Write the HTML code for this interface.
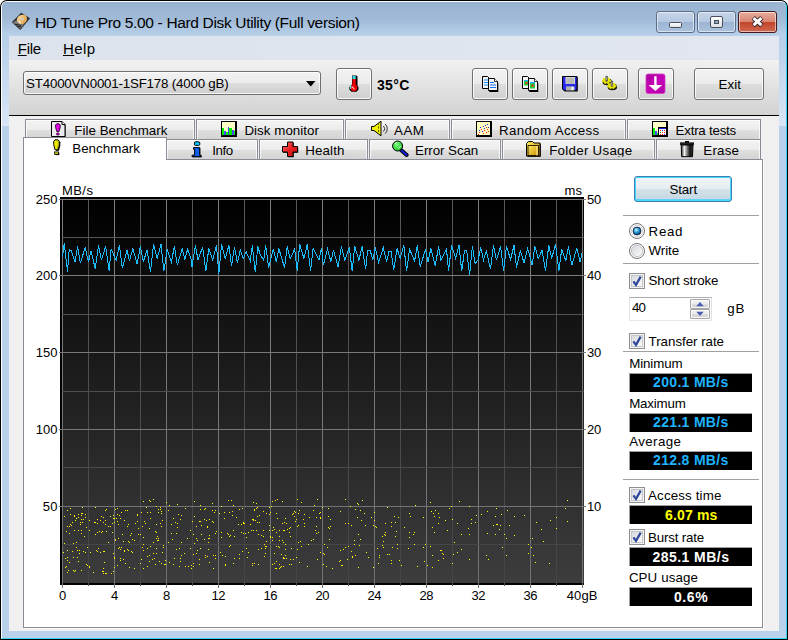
<!DOCTYPE html>
<html><head><meta charset="utf-8"><title>HD Tune Pro 5.00 - Hard Disk Utility (Full version)</title>
<style>
html,body{margin:0;padding:0;background:#fff;width:788px;height:640px;overflow:hidden}
body{font-family:"Liberation Sans",sans-serif;font-size:13.33px;color:#000;position:relative}
div,span,svg{position:absolute;box-sizing:border-box}
.t{white-space:nowrap;line-height:16px}
#win{left:0;top:0;width:788px;height:640px;background:#000;border-radius:7px 7px 0 0}
#frame{left:1px;top:1px;width:786px;height:638px;border-radius:6px 6px 0 0;background:#b9d1ea;border:1px solid;border-color:#fff #35d7ee #35d7ee #fff}
#title{left:2px;top:2px;width:784px;height:34px;border-radius:5px 5px 0 0;background:linear-gradient(#98b3d1 0%,#a0bad7 50%,#b9d1ea 100%)}
#client{left:9px;top:36px;width:770px;height:595px;background:#f0f0f0}
#menubar{left:9px;top:36px;width:770px;height:24px;background:linear-gradient(90deg,#dce3ed,#e2e7ef)}
#toolbar{left:9px;top:60px;width:770px;height:55px;background:linear-gradient(#f1f1f1 0%,#e3e3e3 45%,#d2d2d2 100%)}
#tbline{left:9px;top:115px;width:770px;height:1px;background:#000}
.fs{top:36px;width:7px;height:90px;background:linear-gradient(#b6cee9,#d8e6f6)}
.cb{border:1px solid #5b6d89;border-radius:3px;box-shadow:inset 0 0 0 1px rgba(255,255,255,.55);background:linear-gradient(#c5d5e8 0%,#b6c9e1 48%,#9db5d4 52%,#abc2de 100%)}
#close{background:linear-gradient(#e8ac9e 0%,#d98672 48%,#c3452b 52%,#d06a50 100%);border-color:#431a1c}
.btn{border:1px solid #707070;border-radius:3px;box-shadow:inset 0 0 0 1px rgba(255,255,255,.8);background:linear-gradient(#f2f2f2 0%,#ebebeb 48%,#dddddd 52%,#cfcfcf 100%)}
.tab{border:1px solid #898c95;border-bottom:none;box-shadow:inset 1px 1px 0 rgba(255,255,255,.75),inset -1px 0 0 rgba(255,255,255,.75);background:linear-gradient(#f3f3f3 0%,#ececec 48%,#dedede 52%,#d2d2d2 100%)}
.sep{height:1px;background:#a0a0a0;left:623px;width:136px}
.bb{background:#000;left:629px;width:123px;height:19px;border:solid #a0a0a0;border-width:1px 0 0 1px}
.chk{left:629px;width:16px;height:16px;border:1px solid #8e8f8f;background:#f4f4f4}
.chk i{position:absolute;left:1px;top:1px;width:12px;height:12px;border:1px solid #cfcfcf;background:linear-gradient(135deg,#d9dcdf,#fff)}
.rad{left:629px;width:16px;height:16px;border-radius:50%;border:1px solid #8e8f8f;background:radial-gradient(circle at 50% 50%,#f4f4f4 0,#d2d2d2 60%,#f4f4f4 100%)}
</style></head><body>
<div id="win"></div><div id="frame"></div><div id="title"></div>
<div class="fs" style="left:2px"></div><div class="fs" style="left:779px"></div>
<div id="client"></div><div id="menubar"></div><div id="toolbar"></div><div id="tbline"></div>
<!-- caption buttons -->
<div class="cb" style="left:656px;top:11px;width:39px;height:22px"></div>
<div class="cb" style="left:697px;top:11px;width:39px;height:22px"></div>
<div class="cb" id="close" style="left:738px;top:11px;width:39px;height:22px"></div>
<svg style="left:656px;top:11px" width="121" height="22" viewBox="0 0 121 22">
<defs><linearGradient id="gw" x1="0" y1="0" x2="0" y2="1"><stop offset="0" stop-color="#fff"/><stop offset="1" stop-color="#dcdfe4"/></linearGradient></defs><rect x="13.5" y="11.500" width="12" height="5" rx="1.200" fill="url(#gw)" stroke="#4a4f5c"/>
<rect x="54.5" y="5.500" width="12" height="11" rx="1.500" fill="url(#gw)" stroke="#4a4f5c"/><rect x="58.5" y="9.5" width="4" height="3" fill="#8ea3c2" stroke="#4a4f5c"/>
<path d="M97.200 6.800L105.800 14.600M105.800 6.800L97.200 14.600" stroke="#3d2a30" stroke-width="4.800" fill="none"/><path d="M97.600 7.200L105.400 14.200M105.400 7.200L97.600 14.200" stroke="#fff" stroke-width="2.900" fill="none"/>
</svg>
<!-- toolbar -->
<div class="btn" style="left:23px;top:71px;width:298px;height:24px;border-color:#707070"></div>
<svg style="left:306px;top:81px" width="10" height="6"><path d="M0 0h9.500l-4.750 5.500z" fill="#000"/></svg>
<div class="btn" style="left:336px;top:68px;width:36px;height:32px"></div>
<div class="btn" style="left:472px;top:68px;width:36px;height:32px"></div>
<div class="btn" style="left:512px;top:68px;width:36px;height:32px"></div>
<div class="btn" style="left:552px;top:68px;width:36px;height:32px"></div>
<div class="btn" style="left:592px;top:68px;width:36px;height:32px"></div>
<div class="btn" style="left:638px;top:68px;width:36px;height:32px"></div>
<div class="btn" style="left:694px;top:68px;width:70px;height:32px"></div>

<!-- tabs -->
<div class="tab" style="left:25px;top:119px;width:170px;height:21px"></div>
<div class="tab" style="left:196px;top:119px;width:148px;height:21px"></div>
<div class="tab" style="left:345px;top:119px;width:105px;height:21px"></div>
<div class="tab" style="left:451px;top:119px;width:175px;height:21px"></div>
<div class="tab" style="left:627px;top:119px;width:134px;height:21px"></div>
<div class="tab" style="left:166px;top:139px;width:92px;height:21px"></div>
<div class="tab" style="left:259px;top:139px;width:109px;height:21px"></div>
<div class="tab" style="left:369px;top:139px;width:132px;height:21px"></div>
<div class="tab" style="left:502px;top:139px;width:153px;height:21px"></div>
<div class="tab" style="left:656px;top:139px;width:105px;height:21px"></div>
<div id="panel" style="left:23px;top:159px;width:740px;height:469px;background:#fff;border:1px solid #898c95;box-shadow:1px 1px 0 #fbfbfb"></div>
<div id="seltab" style="left:23px;top:137px;width:144px;height:23px;background:#fff;border:1px solid #898c95;border-bottom:none"></div>

<svg id="chart" width="788" height="640" viewBox="0 0 788 640" style="position:absolute;left:0;top:0" shape-rendering="crispEdges">
<defs><linearGradient id="cg" x1="0" y1="0" x2="0" y2="1"><stop offset="0" stop-color="#000"/><stop offset="1" stop-color="#3d3d3d"/></linearGradient></defs>
<rect x="60" y="197" width="524" height="388" fill="#000"/>
<rect x="62" y="199" width="522" height="384" fill="url(#cg)"/>
<defs><linearGradient id="gMaj" x1="0" y1="0" x2="0" y2="1"><stop offset="0" stop-color="#7e7e7e"/><stop offset="1" stop-color="#727272"/></linearGradient><linearGradient id="gMin" x1="0" y1="0" x2="0" y2="1"><stop offset="0" stop-color="#585858"/><stop offset="1" stop-color="#454545"/></linearGradient></defs>
<rect x="62" y="199" width="1" height="384" fill="url(#gMaj)"/>
<rect x="62" y="583" width="1" height="5" fill="#727272"/>
<rect x="88" y="199" width="1" height="384" fill="url(#gMin)"/>
<rect x="88" y="583" width="1" height="3" fill="#505050"/>
<rect x="114" y="199" width="1" height="384" fill="url(#gMaj)"/>
<rect x="114" y="583" width="1" height="5" fill="#727272"/>
<rect x="140" y="199" width="1" height="384" fill="url(#gMin)"/>
<rect x="140" y="583" width="1" height="3" fill="#505050"/>
<rect x="166" y="199" width="1" height="384" fill="url(#gMaj)"/>
<rect x="166" y="583" width="1" height="5" fill="#727272"/>
<rect x="192" y="199" width="1" height="384" fill="url(#gMin)"/>
<rect x="192" y="583" width="1" height="3" fill="#505050"/>
<rect x="218" y="199" width="1" height="384" fill="url(#gMaj)"/>
<rect x="218" y="583" width="1" height="5" fill="#727272"/>
<rect x="244" y="199" width="1" height="384" fill="url(#gMin)"/>
<rect x="244" y="583" width="1" height="3" fill="#505050"/>
<rect x="270" y="199" width="1" height="384" fill="url(#gMaj)"/>
<rect x="270" y="583" width="1" height="5" fill="#727272"/>
<rect x="296" y="199" width="1" height="384" fill="url(#gMin)"/>
<rect x="296" y="583" width="1" height="3" fill="#505050"/>
<rect x="322" y="199" width="1" height="384" fill="url(#gMaj)"/>
<rect x="322" y="583" width="1" height="5" fill="#727272"/>
<rect x="348" y="199" width="1" height="384" fill="url(#gMin)"/>
<rect x="348" y="583" width="1" height="3" fill="#505050"/>
<rect x="374" y="199" width="1" height="384" fill="url(#gMaj)"/>
<rect x="374" y="583" width="1" height="5" fill="#727272"/>
<rect x="400" y="199" width="1" height="384" fill="url(#gMin)"/>
<rect x="400" y="583" width="1" height="3" fill="#505050"/>
<rect x="426" y="199" width="1" height="384" fill="url(#gMaj)"/>
<rect x="426" y="583" width="1" height="5" fill="#727272"/>
<rect x="452" y="199" width="1" height="384" fill="url(#gMin)"/>
<rect x="452" y="583" width="1" height="3" fill="#505050"/>
<rect x="478" y="199" width="1" height="384" fill="url(#gMaj)"/>
<rect x="478" y="583" width="1" height="5" fill="#727272"/>
<rect x="504" y="199" width="1" height="384" fill="url(#gMin)"/>
<rect x="504" y="583" width="1" height="3" fill="#505050"/>
<rect x="530" y="199" width="1" height="384" fill="url(#gMaj)"/>
<rect x="530" y="583" width="1" height="5" fill="#727272"/>
<rect x="556" y="199" width="1" height="384" fill="url(#gMin)"/>
<rect x="556" y="583" width="1" height="3" fill="#505050"/>
<rect x="582" y="199" width="1" height="384" fill="url(#gMaj)"/>
<rect x="582" y="583" width="1" height="5" fill="#727272"/>
<rect x="59" y="199" width="527" height="1" fill="#7e7e7e"/>
<rect x="62" y="237" width="522" height="1" fill="#565656"/>
<rect x="59" y="275" width="527" height="1" fill="#7c7c7c"/>
<rect x="62" y="314" width="522" height="1" fill="#525252"/>
<rect x="59" y="352" width="527" height="1" fill="#797979"/>
<rect x="62" y="391" width="522" height="1" fill="#4e4e4e"/>
<rect x="59" y="429" width="527" height="1" fill="#777777"/>
<rect x="62" y="467" width="522" height="1" fill="#4b4b4b"/>
<rect x="59" y="506" width="527" height="1" fill="#747474"/>
<rect x="62" y="544" width="522" height="1" fill="#474747"/>
<path d="M73 557h1v1h-1zM83 519h1v1h-1zM74 571h1v1h-1zM69 562h1v1h-1zM76 518h1v1h-1zM80 522h1v1h-1zM70 514h1v1h-1zM81 513h1v1h-1zM70 524h1v1h-1zM72 522h1v1h-1zM81 530h1v1h-1zM66 531h1v1h-1zM74 515h1v1h-1zM81 533h1v1h-1zM78 561h1v1h-1zM87 565h1v1h-1zM74 530h1v1h-1zM85 517h1v1h-1zM81 570h1v1h-1zM73 543h1v1h-1zM82 522h1v1h-1zM79 550h1v1h-1zM67 560h1v1h-1zM64 516h1v1h-1zM87 547h1v1h-1zM73 570h1v1h-1zM81 515h1v1h-1zM65 567h1v1h-1zM85 514h1v1h-1zM86 564h1v1h-1zM72 551h1v1h-1zM63 552h1v1h-1zM68 570h1v1h-1zM64 543h1v1h-1zM67 557h1v1h-1zM75 570h1v1h-1zM65 558h1v1h-1zM80 524h1v1h-1zM76 542h1v1h-1zM85 552h1v1h-1zM84 536h1v1h-1zM67 526h1v1h-1zM70 508h1v1h-1zM78 530h1v1h-1zM71 525h1v1h-1zM76 547h1v1h-1zM67 572h1v1h-1zM82 513h1v1h-1zM77 557h1v1h-1zM75 520h1v1h-1zM78 514h1v1h-1zM69 533h1v1h-1zM77 550h1v1h-1zM82 507h1v1h-1zM81 519h1v1h-1zM74 516h1v1h-1zM69 526h1v1h-1zM83 551h1v1h-1zM82 522h1v1h-1zM66 566h1v1h-1zM78 517h1v1h-1zM67 550h1v1h-1zM86 527h1v1h-1zM79 553h1v1h-1zM67 510h1v1h-1zM113 518h1v1h-1zM111 573h1v1h-1zM100 552h1v1h-1zM113 571h1v1h-1zM99 531h1v1h-1zM114 558h1v1h-1zM112 532h1v1h-1zM105 510h1v1h-1zM89 567h1v1h-1zM97 551h1v1h-1zM103 551h1v1h-1zM100 520h1v1h-1zM96 550h1v1h-1zM95 507h1v1h-1zM104 551h1v1h-1zM114 522h1v1h-1zM101 532h1v1h-1zM104 562h1v1h-1zM114 518h1v1h-1zM114 557h1v1h-1zM103 517h1v1h-1zM112 523h1v1h-1zM89 566h1v1h-1zM114 567h1v1h-1zM110 526h1v1h-1zM106 509h1v1h-1zM89 520h1v1h-1zM105 524h1v1h-1zM102 531h1v1h-1zM95 534h1v1h-1zM98 548h1v1h-1zM97 523h1v1h-1zM90 552h1v1h-1zM103 573h1v1h-1zM102 571h1v1h-1zM93 572h1v1h-1zM89 530h1v1h-1zM108 526h1v1h-1zM94 522h1v1h-1zM106 573h1v1h-1zM105 520h1v1h-1zM106 531h1v1h-1zM97 519h1v1h-1zM105 510h1v1h-1zM113 515h1v1h-1zM103 571h1v1h-1zM108 542h1v1h-1zM103 568h1v1h-1zM105 573h1v1h-1zM97 532h1v1h-1zM103 522h1v1h-1zM101 516h1v1h-1zM110 516h1v1h-1zM95 522h1v1h-1zM113 553h1v1h-1zM119 515h1v1h-1zM129 567h1v1h-1zM118 538h1v1h-1zM120 560h1v1h-1zM122 534h1v1h-1zM131 533h1v1h-1zM121 512h1v1h-1zM138 528h1v1h-1zM132 552h1v1h-1zM115 540h1v1h-1zM134 568h1v1h-1zM117 565h1v1h-1zM140 563h1v1h-1zM118 524h1v1h-1zM116 518h1v1h-1zM123 559h1v1h-1zM128 550h1v1h-1zM123 541h1v1h-1zM131 551h1v1h-1zM125 510h1v1h-1zM140 534h1v1h-1zM117 508h1v1h-1zM135 523h1v1h-1zM117 521h1v1h-1zM117 514h1v1h-1zM129 542h1v1h-1zM128 524h1v1h-1zM134 540h1v1h-1zM137 514h1v1h-1zM120 518h1v1h-1zM121 547h1v1h-1zM124 520h1v1h-1zM124 550h1v1h-1zM120 558h1v1h-1zM115 509h1v1h-1zM115 539h1v1h-1zM132 539h1v1h-1zM130 535h1v1h-1zM118 548h1v1h-1zM128 541h1v1h-1zM127 526h1v1h-1zM137 521h1v1h-1zM125 563h1v1h-1zM137 515h1v1h-1zM127 510h1v1h-1zM119 547h1v1h-1zM138 534h1v1h-1zM120 549h1v1h-1zM127 549h1v1h-1zM124 551h1v1h-1zM150 501h1v1h-1zM146 507h1v1h-1zM149 528h1v1h-1zM158 509h1v1h-1zM150 518h1v1h-1zM141 512h1v1h-1zM156 548h1v1h-1zM147 556h1v1h-1zM141 559h1v1h-1zM143 544h1v1h-1zM142 526h1v1h-1zM150 512h1v1h-1zM159 561h1v1h-1zM165 564h1v1h-1zM163 545h1v1h-1zM153 553h1v1h-1zM156 553h1v1h-1zM160 509h1v1h-1zM163 547h1v1h-1zM154 558h1v1h-1zM157 540h1v1h-1zM165 560h1v1h-1zM166 502h1v1h-1zM143 501h1v1h-1zM161 513h1v1h-1zM153 542h1v1h-1zM142 547h1v1h-1zM158 538h1v1h-1zM149 500h1v1h-1zM164 564h1v1h-1zM158 540h1v1h-1zM143 537h1v1h-1zM149 561h1v1h-1zM149 555h1v1h-1zM147 548h1v1h-1zM155 531h1v1h-1zM143 550h1v1h-1zM150 546h1v1h-1zM161 511h1v1h-1zM160 523h1v1h-1zM161 526h1v1h-1zM160 507h1v1h-1zM156 524h1v1h-1zM162 520h1v1h-1zM162 552h1v1h-1zM157 536h1v1h-1zM155 564h1v1h-1zM158 512h1v1h-1zM156 506h1v1h-1zM143 568h1v1h-1zM155 531h1v1h-1zM147 566h1v1h-1zM147 512h1v1h-1zM145 523h1v1h-1zM152 559h1v1h-1zM161 563h1v1h-1zM144 521h1v1h-1zM156 538h1v1h-1zM153 499h1v1h-1zM156 532h1v1h-1zM176 533h1v1h-1zM178 514h1v1h-1zM177 504h1v1h-1zM179 566h1v1h-1zM173 564h1v1h-1zM190 530h1v1h-1zM169 562h1v1h-1zM185 566h1v1h-1zM180 561h1v1h-1zM168 510h1v1h-1zM188 566h1v1h-1zM171 524h1v1h-1zM180 519h1v1h-1zM191 568h1v1h-1zM180 558h1v1h-1zM191 565h1v1h-1zM184 553h1v1h-1zM169 505h1v1h-1zM181 515h1v1h-1zM187 538h1v1h-1zM168 542h1v1h-1zM171 533h1v1h-1zM177 523h1v1h-1zM190 548h1v1h-1zM175 522h1v1h-1zM176 549h1v1h-1zM179 548h1v1h-1zM172 539h1v1h-1zM192 521h1v1h-1zM181 555h1v1h-1zM181 542h1v1h-1zM173 518h1v1h-1zM177 527h1v1h-1zM174 558h1v1h-1zM185 508h1v1h-1zM216 531h1v1h-1zM206 520h1v1h-1zM205 555h1v1h-1zM194 543h1v1h-1zM204 539h1v1h-1zM209 562h1v1h-1zM199 564h1v1h-1zM200 548h1v1h-1zM207 526h1v1h-1zM193 534h1v1h-1zM215 558h1v1h-1zM208 538h1v1h-1zM193 566h1v1h-1zM209 535h1v1h-1zM200 521h1v1h-1zM197 550h1v1h-1zM196 553h1v1h-1zM215 555h1v1h-1zM207 556h1v1h-1zM194 501h1v1h-1zM200 509h1v1h-1zM213 568h1v1h-1zM197 540h1v1h-1zM213 555h1v1h-1zM196 526h1v1h-1zM209 519h1v1h-1zM205 557h1v1h-1zM212 503h1v1h-1zM207 527h1v1h-1zM213 522h1v1h-1zM208 542h1v1h-1zM200 505h1v1h-1zM215 510h1v1h-1zM193 563h1v1h-1zM214 512h1v1h-1zM201 534h1v1h-1zM204 509h1v1h-1zM215 533h1v1h-1zM204 519h1v1h-1zM193 554h1v1h-1zM209 538h1v1h-1zM199 559h1v1h-1zM199 521h1v1h-1zM201 525h1v1h-1zM196 538h1v1h-1zM212 521h1v1h-1zM208 549h1v1h-1zM194 516h1v1h-1zM205 508h1v1h-1zM212 510h1v1h-1zM241 532h1v1h-1zM233 563h1v1h-1zM229 512h1v1h-1zM224 518h1v1h-1zM239 554h1v1h-1zM233 505h1v1h-1zM230 535h1v1h-1zM224 512h1v1h-1zM227 533h1v1h-1zM222 555h1v1h-1zM225 556h1v1h-1zM228 534h1v1h-1zM221 506h1v1h-1zM225 565h1v1h-1zM233 530h1v1h-1zM242 508h1v1h-1zM239 558h1v1h-1zM239 509h1v1h-1zM231 500h1v1h-1zM244 523h1v1h-1zM225 564h1v1h-1zM238 524h1v1h-1zM229 546h1v1h-1zM220 552h1v1h-1zM241 524h1v1h-1zM228 500h1v1h-1zM219 513h1v1h-1zM234 536h1v1h-1zM243 523h1v1h-1zM232 515h1v1h-1zM234 558h1v1h-1zM242 551h1v1h-1zM243 522h1v1h-1zM229 536h1v1h-1zM230 545h1v1h-1zM221 532h1v1h-1zM243 533h1v1h-1zM221 537h1v1h-1zM236 517h1v1h-1zM232 511h1v1h-1zM253 520h1v1h-1zM248 552h1v1h-1zM259 515h1v1h-1zM258 564h1v1h-1zM266 541h1v1h-1zM269 514h1v1h-1zM269 525h1v1h-1zM253 530h1v1h-1zM253 519h1v1h-1zM259 522h1v1h-1zM252 563h1v1h-1zM263 511h1v1h-1zM257 522h1v1h-1zM261 548h1v1h-1zM270 536h1v1h-1zM246 537h1v1h-1zM252 565h1v1h-1zM256 503h1v1h-1zM252 519h1v1h-1zM264 544h1v1h-1zM251 530h1v1h-1zM261 535h1v1h-1zM264 556h1v1h-1zM266 513h1v1h-1zM265 546h1v1h-1zM256 530h1v1h-1zM255 520h1v1h-1zM253 502h1v1h-1zM245 533h1v1h-1zM266 546h1v1h-1zM254 509h1v1h-1zM270 537h1v1h-1zM247 557h1v1h-1zM257 516h1v1h-1zM265 548h1v1h-1zM250 524h1v1h-1zM258 549h1v1h-1zM254 510h1v1h-1zM254 563h1v1h-1zM256 508h1v1h-1zM269 530h1v1h-1zM265 553h1v1h-1zM257 507h1v1h-1zM258 534h1v1h-1zM248 532h1v1h-1zM263 536h1v1h-1zM269 507h1v1h-1zM246 548h1v1h-1zM270 512h1v1h-1zM263 530h1v1h-1zM294 516h1v1h-1zM282 540h1v1h-1zM276 513h1v1h-1zM283 558h1v1h-1zM296 519h1v1h-1zM280 567h1v1h-1zM272 537h1v1h-1zM281 566h1v1h-1zM291 564h1v1h-1zM293 559h1v1h-1zM276 561h1v1h-1zM278 546h1v1h-1zM277 518h1v1h-1zM289 532h1v1h-1zM287 529h1v1h-1zM274 553h1v1h-1zM277 499h1v1h-1zM292 514h1v1h-1zM283 542h1v1h-1zM291 548h1v1h-1zM284 522h1v1h-1zM284 530h1v1h-1zM285 518h1v1h-1zM271 506h1v1h-1zM285 555h1v1h-1zM290 536h1v1h-1zM276 532h1v1h-1zM274 529h1v1h-1zM284 558h1v1h-1zM285 549h1v1h-1zM272 501h1v1h-1zM273 527h1v1h-1zM295 512h1v1h-1zM272 564h1v1h-1zM283 557h1v1h-1zM275 500h1v1h-1zM290 559h1v1h-1zM274 563h1v1h-1zM286 558h1v1h-1zM296 557h1v1h-1zM294 511h1v1h-1zM282 523h1v1h-1zM276 546h1v1h-1zM279 536h1v1h-1zM275 568h1v1h-1zM286 523h1v1h-1zM290 527h1v1h-1zM282 501h1v1h-1zM283 566h1v1h-1zM279 564h1v1h-1zM283 557h1v1h-1zM279 540h1v1h-1zM272 530h1v1h-1zM285 544h1v1h-1zM293 513h1v1h-1zM279 547h1v1h-1zM283 530h1v1h-1zM279 530h1v1h-1zM289 528h1v1h-1zM295 521h1v1h-1zM276 568h1v1h-1zM272 540h1v1h-1zM279 568h1v1h-1zM289 564h1v1h-1zM281 554h1v1h-1zM298 525h1v1h-1zM316 533h1v1h-1zM313 510h1v1h-1zM301 546h1v1h-1zM317 499h1v1h-1zM297 526h1v1h-1zM300 541h1v1h-1zM304 526h1v1h-1zM315 530h1v1h-1zM316 517h1v1h-1zM301 502h1v1h-1zM319 513h1v1h-1zM299 562h1v1h-1zM318 532h1v1h-1zM322 507h1v1h-1zM298 542h1v1h-1zM308 544h1v1h-1zM311 540h1v1h-1zM320 517h1v1h-1zM297 499h1v1h-1zM309 517h1v1h-1zM298 513h1v1h-1zM297 549h1v1h-1zM303 519h1v1h-1zM313 539h1v1h-1zM317 559h1v1h-1zM316 526h1v1h-1zM299 510h1v1h-1zM320 552h1v1h-1zM314 505h1v1h-1zM320 512h1v1h-1zM320 518h1v1h-1zM304 523h1v1h-1zM304 514h1v1h-1zM307 566h1v1h-1zM345 523h1v1h-1zM345 547h1v1h-1zM340 550h1v1h-1zM348 523h1v1h-1zM332 568h1v1h-1zM329 539h1v1h-1zM323 564h1v1h-1zM330 519h1v1h-1zM328 527h1v1h-1zM329 528h1v1h-1zM342 565h1v1h-1zM343 549h1v1h-1zM340 560h1v1h-1zM339 561h1v1h-1zM323 553h1v1h-1zM330 526h1v1h-1zM348 546h1v1h-1zM341 565h1v1h-1zM328 508h1v1h-1zM326 566h1v1h-1zM328 516h1v1h-1zM345 499h1v1h-1zM327 547h1v1h-1zM324 554h1v1h-1zM324 544h1v1h-1zM347 559h1v1h-1zM340 511h1v1h-1zM373 567h1v1h-1zM361 520h1v1h-1zM355 509h1v1h-1zM374 512h1v1h-1zM373 525h1v1h-1zM364 513h1v1h-1zM374 520h1v1h-1zM358 534h1v1h-1zM357 503h1v1h-1zM358 504h1v1h-1zM359 545h1v1h-1zM365 525h1v1h-1zM368 557h1v1h-1zM362 500h1v1h-1zM360 510h1v1h-1zM366 552h1v1h-1zM351 525h1v1h-1zM354 540h1v1h-1zM355 555h1v1h-1zM350 506h1v1h-1zM352 557h1v1h-1zM354 544h1v1h-1zM360 539h1v1h-1zM357 517h1v1h-1zM358 567h1v1h-1zM371 517h1v1h-1zM352 556h1v1h-1zM351 551h1v1h-1zM392 547h1v1h-1zM385 532h1v1h-1zM387 554h1v1h-1zM377 548h1v1h-1zM375 526h1v1h-1zM383 541h1v1h-1zM391 563h1v1h-1zM395 536h1v1h-1zM379 555h1v1h-1zM397 548h1v1h-1zM376 527h1v1h-1zM391 560h1v1h-1zM389 554h1v1h-1zM385 535h1v1h-1zM397 544h1v1h-1zM382 536h1v1h-1zM395 522h1v1h-1zM391 526h1v1h-1zM399 560h1v1h-1zM394 516h1v1h-1zM382 545h1v1h-1zM391 522h1v1h-1zM385 523h1v1h-1zM398 517h1v1h-1zM396 531h1v1h-1zM379 557h1v1h-1zM384 534h1v1h-1zM383 547h1v1h-1zM378 563h1v1h-1zM387 507h1v1h-1zM413 534h1v1h-1zM423 547h1v1h-1zM410 516h1v1h-1zM409 532h1v1h-1zM401 565h1v1h-1zM414 544h1v1h-1zM424 561h1v1h-1zM408 548h1v1h-1zM425 544h1v1h-1zM408 548h1v1h-1zM404 527h1v1h-1zM409 513h1v1h-1zM414 532h1v1h-1zM423 517h1v1h-1zM409 537h1v1h-1zM415 505h1v1h-1zM417 566h1v1h-1zM432 527h1v1h-1zM451 506h1v1h-1zM430 502h1v1h-1zM432 567h1v1h-1zM433 513h1v1h-1zM445 520h1v1h-1zM449 508h1v1h-1zM447 530h1v1h-1zM443 554h1v1h-1zM441 550h1v1h-1zM432 555h1v1h-1zM430 546h1v1h-1zM438 523h1v1h-1zM435 510h1v1h-1zM427 565h1v1h-1zM440 550h1v1h-1zM438 513h1v1h-1zM434 532h1v1h-1zM443 558h1v1h-1zM439 517h1v1h-1zM431 511h1v1h-1zM452 519h1v1h-1zM442 553h1v1h-1zM434 516h1v1h-1zM438 560h1v1h-1zM459 501h1v1h-1zM469 506h1v1h-1zM567 500h1v1h-1zM565 508h1v1h-1zM496 508h1v1h-1zM487 511h1v1h-1zM507 510h1v1h-1zM476 515h1v1h-1zM481 514h1v1h-1zM501 514h1v1h-1zM495 516h1v1h-1zM514 516h1v1h-1zM524 515h1v1h-1zM471 519h1v1h-1zM475 522h1v1h-1zM457 523h1v1h-1zM471 523h1v1h-1zM493 525h1v1h-1zM496 524h1v1h-1zM497 524h1v1h-1zM500 525h1v1h-1zM509 525h1v1h-1zM468 528h1v1h-1zM499 529h1v1h-1zM461 534h1v1h-1zM469 534h1v1h-1zM487 533h1v1h-1zM495 534h1v1h-1zM504 534h1v1h-1zM514 535h1v1h-1zM506 538h1v1h-1zM454 542h1v1h-1zM461 549h1v1h-1zM457 552h1v1h-1zM453 554h1v1h-1zM502 547h1v1h-1zM486 555h1v1h-1zM488 559h1v1h-1zM506 555h1v1h-1zM469 559h1v1h-1zM452 563h1v1h-1zM536 522h1v1h-1zM550 520h1v1h-1zM556 517h1v1h-1zM567 521h1v1h-1zM541 529h1v1h-1zM556 528h1v1h-1zM532 538h1v1h-1zM543 541h1v1h-1zM528 544h1v1h-1zM531 547h1v1h-1zM528 553h1v1h-1zM533 555h1v1h-1zM535 562h1v1h-1zM549 563h1v1h-1z" fill="#ffff00"/>
<path d="M62.5 256.8 L64.2 243.0 L67.5 271.5 L69.2 249.2 L71.4 250.9 L75.1 261.8 L77.6 246.4 L80.4 263.1 L85.1 247.6 L88.5 261.8 L91.0 250.9 L95.2 268.5 L98.5 245.4 L101.5 260.1 L105.6 246.4 L109.1 271.0 L111.1 249.2 L116.1 260.1 L119.5 245.4 L122.3 268.2 L127.0 250.1 L129.5 261.0 L132.9 248.4 L137.1 264.3 L140.4 246.4 L143.3 261.8 L147.1 250.1 L150.5 272.2 L153.5 244.2 L157.2 258.5 L161.0 244.2 L163.9 271.0 L167.2 249.2 L171.4 261.8 L174.4 246.4 L177.3 265.2 L182.3 248.4 L184.8 260.1 L187.6 249.2 L191.5 260.1 L192.0 266.8 L195.4 245.4 L198.0 260.1 L202.6 247.1 L205.9 271.0 L208.8 248.4 L212.6 260.1 L216.5 245.1 L218.8 274.4 L221.5 244.2 L225.2 258.5 L228.9 245.4 L231.5 266.0 L234.4 247.1 L237.4 262.6 L240.3 250.1 L243.3 258.5 L246.1 251.8 L250.3 261.0 L252.3 245.4 L255.3 272.2 L257.8 246.4 L260.4 255.1 L263.7 260.1 L265.7 245.4 L268.7 267.7 L273.3 249.2 L276.3 261.8 L278.8 248.4 L284.6 267.7 L287.2 246.4 L290.2 258.5 L294.7 249.2 L297.2 271.0 L299.7 244.2 L303.9 258.5 L307.3 244.2 L310.6 271.0 L313.1 248.4 L319.0 260.1 L321.5 247.6 L323.4 265.2 L327.5 249.2 L330.9 261.8 L333.4 250.1 L338.1 266.8 L341.4 246.4 L344.8 260.1 L349.3 247.6 L352.2 271.0 L354.7 246.4 L358.9 260.1 L362.2 246.4 L365.6 269.3 L367.7 250.1 L370.3 250.9 L372.8 260.1 L375.3 247.6 L378.6 262.6 L383.3 247.6 L386.7 261.8 L389.0 250.9 L391.2 251.8 L393.7 270.2 L397.1 248.4 L400.1 258.5 L403.8 245.4 L406.6 271.0 L409.6 249.2 L414.6 261.0 L417.2 245.4 L420.2 266.8 L425.5 249.2 L428.0 261.8 L430.9 248.4 L435.2 266.0 L438.6 246.4 L440.9 260.1 L446.5 249.2 L448.6 271.0 L451.5 245.4 L455.7 258.5 L459.0 245.4 L461.7 271.0 L464.6 250.1 L466.7 250.9 L469.6 274.9 L472.4 246.4 L475.1 263.5 L478.0 260.1 L480.8 247.6 L483.5 260.1 L486.3 250.9 L490.5 269.3 L493.5 245.4 L496.4 260.1 L500.6 246.4 L503.6 271.0 L506.4 246.4 L510.6 259.3 L514.0 245.4 L516.5 267.7 L520.3 250.9 L524.0 262.6 L527.7 248.4 L532.1 265.2 L534.9 246.4 L538.3 258.5 L542.1 250.1 L545.5 271.0 L548.8 245.4 L551.7 258.5 L555.5 244.2 L558.9 271.0 L561.7 249.2 L565.9 261.0 L568.4 246.4 L571.8 265.2 L576.8 248.4 L580.1 261.8 L582.0 253.4" fill="none" stroke="#1cbcff" stroke-width="1" shape-rendering="crispEdges" stroke-linejoin="miter"/>
</svg>
<!-- right panel -->
<div id="start" style="left:634px;top:176px;width:98px;height:26px;border:1px solid #3c7fb1;border-radius:3px;box-shadow:inset 0 0 0 1px #48d8fb,inset 0 -2px 0 0 #5fd4f5;background:linear-gradient(#f1f5f8 0%,#e6edf1 48%,#d4e1e9 52%,#c4d7e4 100%)"></div>
<div class="sep" style="top:215px"></div>
<div class="sep" style="top:263px"></div>
<div style="left:629px;top:297px;width:83px;height:24px;background:#fff;border:1px solid;border-color:#abadb3 #dbdfe6 #e3e9ef #e2e3ea"></div>
<div class="btn" style="left:690px;top:299px;width:20px;height:10px;border-radius:1px;border-color:#a5a5a5"></div>
<div class="btn" style="left:690px;top:309px;width:20px;height:10px;border-radius:1px;border-color:#a5a5a5"></div>
<svg style="left:690px;top:299px" width="20" height="20"><path d="M6.300 7.200l3.700-4.200l3.700 4.200z M6.300 12.800l3.700 4.200l3.700-4.200z" fill="#4a5cb0"/></svg>
<div class="sep" style="top:351px"></div>
<div class="bb" style="top:373px"></div>
<div class="bb" style="top:413px"></div>
<div class="bb" style="top:451px"></div>
<div class="sep" style="top:479px"></div>
<div class="bb" style="top:505px"></div>
<div class="bb" style="top:547px"></div>
<div class="bb" style="top:587px"></div>
<svg id="icons" width="788" height="640" viewBox="0 0 788 640" style="left:0;top:0">
<defs>
<linearGradient id="gOr" x1="0" y1="0" x2="1" y2="1"><stop offset="0" stop-color="#ffe2a8"/><stop offset="1" stop-color="#dc9838"/></linearGradient>
<linearGradient id="gRed" x1="0" y1="0" x2="1" y2="1"><stop offset="0" stop-color="#ff7070"/><stop offset=".5" stop-color="#e82020"/><stop offset="1" stop-color="#c01010"/></linearGradient>
<linearGradient id="gFold" x1="0" y1="0" x2="1" y2="1"><stop offset="0" stop-color="#ffe860"/><stop offset="1" stop-color="#c89000"/></linearGradient>
<linearGradient id="gTrash" x1="0" y1="0" x2="1" y2="0"><stop offset="0" stop-color="#303030"/><stop offset=".28" stop-color="#f0f0f0"/><stop offset=".5" stop-color="#808080"/><stop offset=".75" stop-color="#101010"/><stop offset="1" stop-color="#404040"/></linearGradient>
<linearGradient id="gPur" x1="0" y1="0" x2="1" y2="1"><stop offset="0" stop-color="#a8009c"/><stop offset=".5" stop-color="#c800b8"/><stop offset="1" stop-color="#b000a4"/></linearGradient>
<radialGradient id="gGreen" cx=".4" cy=".35" r=".7"><stop offset="0" stop-color="#80ff80"/><stop offset="1" stop-color="#10c020"/></radialGradient>
<radialGradient id="gDot" cx=".4" cy=".35" r=".7"><stop offset="0" stop-color="#c8f6ff"/><stop offset=".5" stop-color="#2498d8"/><stop offset="1" stop-color="#0a3a68"/></radialGradient>
<linearGradient id="gChk" x1="0" y1="0" x2="1" y2="1"><stop offset="0" stop-color="#d4d8dc"/><stop offset="1" stop-color="#fdfdfd"/></linearGradient>
<radialGradient id="gRad" cx=".5" cy=".5" r=".5"><stop offset="0" stop-color="#f4f4f4"/><stop offset=".6" stop-color="#e0e0e0"/><stop offset="1" stop-color="#c4c4c4"/></radialGradient>
<g id="ck"><rect x="629.500" y=".5" width="15" height="15" fill="#f4f4f4" stroke="#8e8f8f"/><rect x="631.500" y="2.500" width="11" height="11" fill="url(#gChk)" stroke="#c2c6ca"/>
<path d="M633.400 8.300L636 11.900L640.700 3.600" fill="none" stroke="#31489a" stroke-width="2.200"/></g>
</defs>
<!-- title icon: hard disk -->
<g id="i-hdd">
<path d="M21.2 12.800L30 18.200L20.300 30L11.800 22.300z" fill="#2c2c2c"/>
<path d="M12.500 22.400L20.200 28.800L24.500 23.500L17 20z" fill="#7a7a7a"/>
<path d="M15 24.200l6 1.200M16.500 26l4.500 1" stroke="#222" stroke-width="1"/>
<ellipse cx="22" cy="19.300" rx="5.200" ry="4.500" transform="rotate(-25 22 19.300)" fill="url(#gOr)"/>
<rect x="20.500" y="18.200" width="3.400" height="1.800" fill="#c8ccd8"/>
<path d="M19.500 21l.8 2.500" stroke="#fff" stroke-width="1"/>
</g>
<!-- File Benchmark: page with magenta ! -->
<g id="i-fb">
<path d="M52 122h10.500l3 3v12h-13.500z" fill="#000"/>
<path d="M51.500 121.500h10.500l3 3v12h-13.500z" fill="#ececec" stroke="#000"/>
<path d="M62 121.500v3h3" fill="#fff" stroke="#000"/>
<path d="M56.700 123.800h2.400l1.100 1.300v2.400l-1.200 4h-2.200l-1.200-4v-2.400z" fill="#e400e4" stroke="#280028" stroke-width=".9"/>
<rect x="56.500" y="133" width="2.700" height="2" rx=".8" fill="#e400e4" stroke="#280028" stroke-width=".8"/>
</g>
<!-- Benchmark: yellow ! -->
<g id="i-bm">
<path d="M55 139.800h3l1.300 1.500v3.200l-1.300 5.300h-3l-1.300-5.300v-3.200z" fill="#000" transform="translate(1 1)"/>
<path d="M55 139.800h3l1.300 1.500v3.200l-1.300 5.300h-3l-1.300-5.300v-3.200z" fill="#e8e800" stroke="#000" stroke-width="1"/>
<path d="M57.900 141.200l.6 1v2.200l-1 4" fill="none" stroke="#a4a400" stroke-width="1.100"/>
<rect x="55.400" y="152.600" width="3.900" height="2.500" fill="#000"/>
<rect x="54.600" y="151.900" width="3.800" height="2.400" fill="#d8d800" stroke="#000" stroke-width=".8"/>
</g>
<!-- Disk monitor -->
<g id="i-dm" shape-rendering="crispEdges">
<rect x="221" y="121" width="16" height="16" fill="#000"/>
<rect x="222" y="122" width="13" height="13" fill="#ffffc8"/>
<rect x="222" y="128" width="2" height="7" fill="#00f000"/><rect x="224" y="131" width="2" height="4" fill="#4848ff"/>
<rect x="226" y="132" width="2" height="3" fill="#00f000"/><rect x="228" y="127" width="1" height="8" fill="#4848ff"/>
<rect x="229" y="128" width="3" height="7" fill="#00f000"/><rect x="232" y="130" width="2" height="5" fill="#4848ff"/>
<rect x="234" y="131" width="1" height="4" fill="#00f000"/>
</g>
<!-- Info -->
<g id="i-info">
<rect x="194.400" y="141.800" width="5.400" height="3.600" rx="1.200" fill="#08c8ff" stroke="#000"/>
<path d="M193.500 147.600h6.200v7.600h1.400v1.500h-9v-1.500h2.500v-6h-1.100z" fill="#000" transform="translate(.6 .5)"/>
<path d="M193.500 147.600h6.200v7.600h1.400v1.500h-9v-1.500h2.500v-6h-1.100z" fill="#1060f0" stroke="#000" stroke-width="1"/>
</g>
<!-- Health: red cross -->
<g id="i-health">
<path d="M287.500 142h5.500v4.500h4.500v5.500h-4.500v4.500h-5.500v-4.500h-5v-5.500h5z" fill="#000" transform="translate(.7 .7)"/>
<path d="M287.500 142h5.500v4.500h4.500v5.500h-4.500v4.500h-5.500v-4.500h-5v-5.500h5z" fill="url(#gRed)" stroke="#000" stroke-width="1"/>
</g>
<!-- AAM: speaker -->
<g id="i-aam">
<path d="M371.500 126.500h2.500l7-5.300v14.600l-7-5.300h-2.500z" fill="#f0f000" stroke="#000" stroke-width="1"/>
<path d="M378.500 123v11" stroke="#606000" stroke-width="1" stroke-dasharray="2 1.500"/>
<path d="M383.500 126a4 4 0 0 1 0 5.500M385.200 124a6.500 6.500 0 0 1 0 9.500" fill="none" stroke="#303030" stroke-width="1"/>
</g>
<!-- Error scan: magnifier -->
<g id="i-es">
<path d="M401 150l5.700 5" stroke="#000" stroke-width="4" stroke-linecap="round"/>
<path d="M401.500 150.500l5 4.300" stroke="#1020d0" stroke-width="2.200" stroke-linecap="round"/>
<circle cx="397.600" cy="146" r="5" fill="url(#gGreen)" stroke="#000" stroke-width="1"/>
<path d="M395 144l2-2M398.500 148.500l2.500-2.500" stroke="#d8ffd8" stroke-width="1"/>
</g>
<!-- Random access -->
<g id="i-ra" shape-rendering="crispEdges">
<rect x="476" y="121" width="16" height="16" fill="#000"/>
<rect x="477" y="122" width="13" height="13" fill="#ffffc0"/>
<path d="M479 130h1v1h-1zM480 127h1v1h-1zM482 131h1v1h-1zM484 128h1v1h-1zM485 125h1v1h-1zM487 124h1v1h-1zM488 127h1v1h-1zM483 126h1v1h-1z" fill="#2020ff"/>
<path d="M478 134h1v1h-1zM479 132h1v1h-1zM481 129h1v1h-1zM483 133h1v1h-1zM484 130h1v1h-1zM486 132h1v1h-1zM487 129h1v1h-1zM488 131h1v1h-1zM486 127h1v1h-1z" fill="#ff2020"/>
</g>
<!-- Folder -->
<g id="i-fold">
<path d="M526.500 143.500l2-2h4l1.500 1.500h6v13h-13.500z" fill="#000" transform="translate(.8 .8)"/>
<path d="M526.500 143.500l2-2h4l1.500 1.500h6v13h-13.500z" fill="url(#gFold)" stroke="#000" stroke-width="1"/>
<path d="M528 145.500h10.500v10h-10.500z" fill="url(#gFold)" stroke="#000" stroke-width=".8"/>
<path d="M537 146v9.500" stroke="#fff0a0" stroke-width="1"/>
</g>
<!-- Extra tests -->
<g id="i-et" shape-rendering="crispEdges">
<rect x="652" y="121" width="16" height="16" fill="#000"/>
<rect x="653" y="122" width="13" height="13" fill="#ffffc8"/>
<rect x="653" y="128" width="2" height="7" fill="#00f000"/><rect x="655" y="131" width="2" height="4" fill="#4848ff"/><rect x="657" y="133" width="1" height="2" fill="#00f000"/>
<rect x="658" y="127" width="9" height="9" fill="#000"/>
<rect x="659" y="128" width="7" height="1" fill="#2020e0"/>
<rect x="659" y="129" width="7" height="6" fill="#fff"/>
<path d="M660 130h1v1h-1zM664 130h1v1h-1zM662 132h1v1h-1zM664 132h1v1h-1zM660 134h1v1h-1zM662 134h1v1h-1z" fill="#ff2020"/>
<path d="M662 130h1v1h-1zM664 134h1v1h-1z" fill="#2020ff"/><path d="M660 132h1v1h-1z" fill="#00c000"/>
</g>
<!-- Erase: trash -->
<g id="i-tr">
<rect x="685" y="141" width="4" height="2" fill="#000"/>
<rect x="680" y="142.300" width="14" height="2.700" fill="#202020"/>
<path d="M681.200 145h11.800l-.5 11.700h-10.800z" fill="url(#gTrash)" stroke="#000" stroke-width="1"/>
</g>
<!-- thermometer -->
<g id="i-th">
<path d="M352 75.500h4.500l1 1v9l1 2v2l-2 2.200h-5l-2.200-2.200v-2.500l2.700-2.500z" fill="#000"/>
<rect x="352.500" y="76" width="3.200" height="3" fill="#30e0e8"/>
<rect x="352.500" y="79" width="3.200" height="8" fill="#f00000"/>
<circle cx="353.800" cy="87.800" r="3.400" fill="#f00000"/>
<rect x="349.800" y="85.300" width="1.500" height="3.500" fill="#50e0e8"/>
<path d="M352.200 86.500l.8 1.500l1.500.8" stroke="#fff" stroke-width="1" fill="none"/>
</g>
<!-- copy text -->
<g id="i-c1">
<path d="M482.500 76.500h5l1.500 1.500v10.500h-6.500z" fill="#f4f4f4" stroke="#000"/>
<path d="M484 80h4M484 82.500h4M484 85h4" stroke="#1090ff" stroke-width="1"/>
<path d="M488.500 79.300h6l3 3v9h-9z" fill="#000" transform="translate(.8 .6)"/>
<path d="M488.500 78.500h6l3 3v9h-9z" fill="#f4f4f4" stroke="#000"/>
<path d="M494.500 78.500v3h3" fill="#fff" stroke="#000" stroke-width=".8"/>
<path d="M490 82.500h4M490 85h6M490 87.500h6" stroke="#1070ff" stroke-width="1.200"/>
</g>
<!-- copy image -->
<g id="i-c2">
<path d="M522.500 76.500h5l1.500 1.500v10.500h-6.500z" fill="#f4f4f4" stroke="#000"/>
<rect x="524" y="80" width="4.500" height="5.500" fill="#20d040"/><rect x="524" y="80" width="4.500" height="1.200" fill="#20b0ff"/><rect x="525.500" y="82" width="2" height="2" fill="#e03010"/>
<path d="M528.500 79.300h6l3 3v9h-9z" fill="#000" transform="translate(.8 .6)"/>
<path d="M528.500 78.500h6l3 3v9h-9z" fill="#f4f4f4" stroke="#000"/>
<path d="M534.500 78.500v3h3" fill="#fff" stroke="#000" stroke-width=".8"/>
<rect x="530" y="82" width="5" height="6.500" fill="#20d040"/><rect x="530" y="82" width="5" height="1.300" fill="#20b0ff"/><rect x="531.500" y="84.500" width="2.200" height="2.200" fill="#e03010"/>
</g>
<!-- floppy -->
<g id="i-fl">
<path d="M562.500 76.500h14.500v14.500h-13l-1.500-1.500z" fill="#000" transform="translate(.7 .5)"/>
<path d="M562.500 76.500h14.500v14h-13l-1.500-1.500z" fill="#2828e8" stroke="#000" stroke-width="1"/>
<rect x="565.500" y="77" width="9.500" height="7" fill="#d4d4d4"/>
<path d="M566.500 79h7.500M566.500 81h7.500M566.500 83h7.500" stroke="#909090" stroke-width=".8"/>
<rect x="566" y="86.300" width="8.500" height="4.200" fill="#b0b0b0"/><rect x="571.500" y="87" width="2" height="3" fill="#fff"/>
</g>
<!-- gears -->
<g id="i-ge">
<ellipse cx="607.200" cy="81.900" rx="4.700" ry="3.300" fill="#1c1c00"/>
<ellipse cx="612.400" cy="87" rx="4.700" ry="3.300" fill="#1c1c00"/>
<ellipse cx="606.600" cy="80.600" rx="3.900" ry="2.600" fill="#e6e600" stroke="#e6e600" stroke-width="1.500" stroke-dasharray="1.600 1.200"/>
<ellipse cx="611.800" cy="85.700" rx="3.900" ry="2.600" fill="#e6e600" stroke="#e6e600" stroke-width="1.500" stroke-dasharray="1.600 1.200"/>
<rect x="605.900" y="76.200" width="1.700" height="5" fill="#b0b0b0" stroke="#404040" stroke-width=".6"/>
<rect x="611.100" y="81.200" width="1.700" height="5" fill="#b0b0b0" stroke="#404040" stroke-width=".6"/>
</g>
<!-- purple down arrow -->
<g id="i-pa">
<rect x="646" y="74" width="19" height="19.500" rx="2" fill="url(#gPur)" stroke="#d040c8" stroke-width=".8"/>
<path d="M654.200 76.300h2.400v8.700h5.600l-6.800 6l-6.800-6h5.600z" fill="#fff"/>
</g>
<!-- radios -->
<g id="i-rad">
<circle cx="637" cy="231" r="7.500" fill="#fff" stroke="#757575" stroke-width="1"/>
<circle cx="637" cy="231" r="5.700" fill="#fbfbfb" stroke="#c0c0c0" stroke-width=".7"/>
<circle cx="637" cy="231" r="3.900" fill="url(#gDot)" stroke="#0e2a4a" stroke-width="1"/>
<circle cx="637" cy="251" r="7.500" fill="#fff" stroke="#757575" stroke-width="1"/>
<circle cx="637" cy="251" r="5.700" fill="url(#gChk)" stroke="#b4b8bc" stroke-width=".8"/>
</g>
<!-- checkboxes -->
<g id="i-chk">
<use href="#ck" y="273"/><use href="#ck" y="333"/><use href="#ck" y="487"/><use href="#ck" y="529"/>
</g>
</svg>

<span class="t" style="left:35.0px;top:14.8px;font-size:15.5px;letter-spacing:-0.34px;">HD Tune Pro 5.00 - Hard Disk Utility (Full version)</span>
<span class="t" style="left:17.8px;top:40.5px;font-size:15px;letter-spacing:-0.26px;"><u>F</u>ile</span>
<span class="t" style="left:63.0px;top:40.5px;font-size:15px;letter-spacing:0.45px;"><u>H</u>elp</span>
<span class="t" style="left:26.1px;top:75.5px;font-size:13.33px;letter-spacing:-0.20px;">ST4000VN0001-1SF178 (4000 gB)</span>
<span class="t" style="left:376.9px;top:77.2px;font-size:14px;letter-spacing:0.37px;font-weight:bold;">35°C</span>
<span class="t" style="left:718.4px;top:76.7px;font-size:13.33px;letter-spacing:0.13px;">Exit</span>
<span class="t" style="left:74.3px;top:122.5px;font-size:13.33px;letter-spacing:0.04px;">File Benchmark</span>
<span class="t" style="left:244.4px;top:122.5px;font-size:13.33px;letter-spacing:0.05px;">Disk monitor</span>
<span class="t" style="left:394.1px;top:122.5px;font-size:13.33px;letter-spacing:0.45px;">AAM</span>
<span class="t" style="left:499.1px;top:122.5px;font-size:13.33px;letter-spacing:0.32px;">Random Access</span>
<span class="t" style="left:675.6px;top:122.5px;font-size:13.33px;letter-spacing:-0.23px;">Extra tests</span>
<span class="t" style="left:72.2px;top:140.5px;font-size:13.33px;letter-spacing:0.05px;">Benchmark</span>
<span class="t" style="left:212.2px;top:142.8px;font-size:13.33px;letter-spacing:-0.41px;">Info</span>
<span class="t" style="left:305.3px;top:142.8px;font-size:13.33px;letter-spacing:0.11px;">Health</span>
<span class="t" style="left:415.1px;top:142.8px;font-size:13.33px;letter-spacing:-0.06px;">Error Scan</span>
<span class="t" style="left:549.2px;top:142.8px;font-size:13.33px;letter-spacing:0.27px;clip-path:inset(0 0 2.0px 0);">Folder Usage</span>
<span class="t" style="left:703.3px;top:142.8px;font-size:13.33px;letter-spacing:0.22px;">Erase</span>
<span class="t" style="left:62.1px;top:183.4px;font-size:13px;letter-spacing:0.39px;">MB/s</span>
<span class="t" style="left:564.6px;top:183.4px;font-size:13px;letter-spacing:-0.04px;">ms</span>
<span class="t" style="left:35.7px;top:191.5px;font-size:13px;letter-spacing:-0.00px;">250</span>
<span class="t" style="left:35.7px;top:267.6px;font-size:13px;letter-spacing:-0.00px;">200</span>
<span class="t" style="left:35.7px;top:344.6px;font-size:13px;letter-spacing:-0.00px;">150</span>
<span class="t" style="left:35.7px;top:421.6px;font-size:13px;letter-spacing:-0.00px;">100</span>
<span class="t" style="left:42.8px;top:498.6px;font-size:13px;letter-spacing:0.13px;">50</span>
<span class="t" style="left:587.0px;top:191.5px;font-size:13px;letter-spacing:-0.27px;">50</span>
<span class="t" style="left:587.0px;top:267.6px;font-size:13px;letter-spacing:-0.27px;">40</span>
<span class="t" style="left:587.0px;top:344.6px;font-size:13px;letter-spacing:-0.27px;">30</span>
<span class="t" style="left:587.0px;top:421.6px;font-size:13px;letter-spacing:-0.27px;">20</span>
<span class="t" style="left:587.0px;top:498.6px;font-size:13px;letter-spacing:-0.27px;">10</span>
<span class="t" style="left:59.1px;top:588.2px;font-size:13px;letter-spacing:0.00px;">0</span>
<span class="t" style="left:111.1px;top:588.2px;font-size:13px;letter-spacing:0.00px;">4</span>
<span class="t" style="left:163.1px;top:588.2px;font-size:13px;letter-spacing:0.00px;">8</span>
<span class="t" style="left:211.4px;top:588.2px;font-size:13px;letter-spacing:-0.27px;">12</span>
<span class="t" style="left:263.4px;top:588.2px;font-size:13px;letter-spacing:-0.27px;">16</span>
<span class="t" style="left:315.4px;top:588.2px;font-size:13px;letter-spacing:-0.27px;">20</span>
<span class="t" style="left:367.4px;top:588.2px;font-size:13px;letter-spacing:-0.27px;">24</span>
<span class="t" style="left:419.4px;top:588.2px;font-size:13px;letter-spacing:-0.27px;">28</span>
<span class="t" style="left:471.4px;top:588.2px;font-size:13px;letter-spacing:-0.27px;">32</span>
<span class="t" style="left:523.4px;top:588.2px;font-size:13px;letter-spacing:-0.27px;">36</span>
<span class="t" style="left:566.7px;top:588.2px;font-size:13px;letter-spacing:0.14px;">40gB</span>
<span class="t" style="left:669.6px;top:181.7px;font-size:13.33px;letter-spacing:-0.16px;">Start</span>
<span class="t" style="left:648.6px;top:223.5px;font-size:13.33px;letter-spacing:0.67px;">Read</span>
<span class="t" style="left:648.6px;top:243.3px;font-size:13.33px;letter-spacing:-0.09px;">Write</span>
<span class="t" style="left:648.6px;top:272.8px;font-size:13.33px;letter-spacing:-0.19px;">Short stroke</span>
<span class="t" style="left:632.1px;top:300.4px;font-size:13.33px;letter-spacing:-1.00px;">40</span>
<span class="t" style="left:727.3px;top:300.8px;font-size:13.33px;letter-spacing:0.79px;">gB</span>
<span class="t" style="left:648.6px;top:333.8px;font-size:13.33px;letter-spacing:-0.03px;">Transfer rate</span>
<span class="t" style="left:629.2px;top:355.6px;font-size:13.33px;letter-spacing:-0.11px;">Minimum</span>
<span class="t" style="left:653.1px;top:374.1px;font-size:14px;letter-spacing:0.31px;font-weight:bold;color:#1eb4ff;">200.1 MB/s</span>
<span class="t" style="left:629.2px;top:395.6px;font-size:13.33px;letter-spacing:-0.18px;">Maximum</span>
<span class="t" style="left:653.1px;top:414.1px;font-size:14px;letter-spacing:0.31px;font-weight:bold;color:#1eb4ff;">221.1 MB/s</span>
<span class="t" style="left:629.2px;top:433.6px;font-size:13.33px;letter-spacing:0.40px;">Average</span>
<span class="t" style="left:653.1px;top:451.9px;font-size:14px;letter-spacing:0.31px;font-weight:bold;color:#1eb4ff;">212.8 MB/s</span>
<span class="t" style="left:648.1px;top:488.1px;font-size:13.33px;letter-spacing:0.14px;">Access time</span>
<span class="t" style="left:665.0px;top:506.7px;font-size:14px;letter-spacing:0.17px;font-weight:bold;color:#ffff00;">6.07 ms</span>
<span class="t" style="left:648.1px;top:529.8px;font-size:13.33px;letter-spacing:-0.19px;">Burst rate</span>
<span class="t" style="left:652.5px;top:548.5px;font-size:14px;letter-spacing:0.45px;font-weight:bold;color:#fff;">285.1 MB/s</span>
<span class="t" style="left:628.9px;top:569.8px;font-size:13.33px;letter-spacing:0.10px;">CPU usage</span>
<span class="t" style="left:673.9px;top:588.8px;font-size:14px;letter-spacing:0.63px;font-weight:bold;color:#fff;">0.6%</span>
</body></html>
